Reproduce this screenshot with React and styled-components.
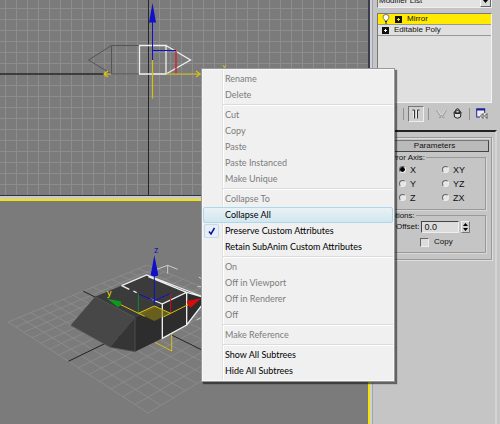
import React from "react";
import styled, { createGlobalStyle } from "styled-components";

const PANEL = "#c5c5c5";
const VIEW_GREY = "#7b7b7b";
const YELLOW = "#f5e400";
const GIZMO_YELLOW = "#d8c010";
const BLUE = "#1010c8";

const GlobalStyle = createGlobalStyle`
  *, *::before, *::after { box-sizing: border-box; }

  body {
    margin: 0;
    background: ${PANEL};
    font-family: "Liberation Sans", Arial, sans-serif;
    font-size: 8px;
    line-height: 10px;
    color: #111;
  }

  button, input, select { font: inherit; color: inherit; margin: 0; }
`;

const Workspace = styled.main`
  position: relative;
  display: flex;
  height: 100vh;
  min-height: 400px;
  overflow: hidden;
`;

/* ---------- viewports ---------- */

const Viewports = styled.div`
  flex: 1;
  min-width: 0;
  display: grid;
  grid-template-rows: 196px 1fr;
  row-gap: 3px;
  background: #c9c9d2;
`;

const Viewport = styled.section`
  min-height: 0;
  overflow: hidden;
  background: ${VIEW_GREY};
  border-right: 2px solid ${(p) => (p.$active ? YELLOW : "#3b3e48")};
  border-top: ${(p) => (p.$active ? `2px solid ${YELLOW}` : "none")};
  border-bottom: ${(p) => (p.$active ? "none" : "1px solid #30333c")};
`;

const Scene = styled.svg`
  display: block;
  width: 100%;
  height: 100%;
`;

// Perspective ground plane, corners: left, bottom, top
const L = [8, 121];
const B = [148, 212];
const T = [147, 64];
const G = -0.241;
const H = 0.179;
const CELLS = 14;

const project = (u, v) => {
  const w = 1 + G * u + H * v;
  return [0, 1].map(
    (i) =>
      ((B[i] * (1 + G) - L[i]) * u + (T[i] * (1 + H) - L[i]) * v + L[i]) / w
  );
};

const segment = (u1, v1, u2, v2) =>
  `M${project(u1, v1).join(" ")}L${project(u2, v2).join(" ")}`;

const groundPath = Array.from({ length: CELLS + 1 }, (_, i) => i / CELLS)
  .map((t) => segment(t, 0, t, 1) + segment(0, t, 1, t))
  .join("");

function FrontView() {
  return (
    <Viewport aria-label="Front viewport">
      <Scene>
        <defs>
          <pattern
            id="grid"
            x="5"
            y="8"
            width="11"
            height="11"
            patternUnits="userSpaceOnUse"
          >
            <path d="M.5 0V11M0 .5H11" stroke="#8d8d8d" fill="none" />
          </pattern>
        </defs>
        <rect width="100%" height="100%" fill="url(#grid)" />
        <path d="M148.5 0V200" stroke="#262626" />
        <path d="M0 74H106" stroke="#262626" strokeWidth="1.3" />
        <g fill="none">
          <path
            d="M139 45.5H111.5L88.5 60L111.5 74H139M111.5 45.5V74"
            stroke="#555"
          />
          <path
            d="M139.5 45.5H166V74H139.5ZM166 45.5L190.5 60L166 74"
            stroke="#efefef"
            strokeWidth="1.3"
          />
          <path d="M152.5 20V60M152.5 50.5H176" stroke={BLUE} />
          <path d="M176 51V74" stroke="#d02830" strokeWidth="1.5" />
          <path
            d="M152.5 60V98.5M166 74H201M196 71L200 74L196 77M111 74H104M108 71L104 74L108 77M106 72L104 74L106 76"
            stroke={GIZMO_YELLOW}
            strokeWidth="1.2"
          />
        </g>
        <path d="M152.5 3L156 22.5H149Z" fill={BLUE} />
        <text x="222" y="70" fontSize="9" fill={GIZMO_YELLOW}>x</text>
      </Scene>
    </Viewport>
  );
}

function PerspectiveView() {
  return (
    <Viewport $active aria-label="Perspective viewport">
      <Scene>
        <path d={groundPath} stroke="#8e8e8e" strokeWidth="0.8" fill="none" />
        <path
          d={segment(0.5, 0, 0.5, 1) + segment(0, 0.5, 1, 0.5)}
          stroke="#1e1e1e"
        />

        {/* model is plotted on a finer grid, three units to the pixel */}
        <g transform="scale(0.33333) translate(0 -63)">
          <path d="M285 350L440 285L603 347L560 340L487 372L405 412Z" fill="#3b3b3b" />
          <path d="M212 436L285 350L405 412L330 502Z" fill="#474747" />
          <path d="M330 502L405 412V515Z" fill="#353535" />
          <path d="M405 412L560 337L604 350V380L560 435L487 475L405 515Z" fill="#2d2d2d" />
          <path d="M285 350L405 412V515M212 436L330 502L405 515" stroke="#5e5e5e" strokeWidth="2" fill="none" />
          <g fill="none" stroke="#eee" strokeWidth="4">
            <path d="M365 317L440 285L603 348M445 290L560 337L487 372V475L560 435L604 378M560 337V435M560 337L604 350" />
            <path d="M365 317L388 328M400 333L410 338M452 357L487 372" />
            <path d="M470 268L503 256L533 268M503 256V281M596 291L604 296M592 320H604M590 420L602 414" strokeWidth="3" stroke="#ccc" />
          </g>
          <path d="M415 400L463 378L510 400L463 423Z" fill="#8f8010" fillOpacity="0.6" />
          <g fill="none" strokeWidth="3">
            <path d="M463 285V378M415 342L463 362L512 340" stroke={BLUE} />
            <path d="M415 340V400" stroke="#148c20" />
            <path d="M512 340V400" stroke="#c81418" />
            <path
              d="M358 372L434 409M415 400L463 378L512 400M490 411L566 373M465 487L515 513V462"
              stroke={GIZMO_YELLOW}
            />
          </g>
          <path d="M463 226L475 286Q463 292 452 286Z" fill={BLUE} />
          <path d="M322 356L362 364Q368 374 354 382Z" fill="#0c9a18" />
          <path d="M604 355L560 363Q562 377 572 383Z" fill="#d80c0c" />
        </g>
        <text x="154" y="52" fontSize="9" fill={BLUE}>z</text>
        <text x="107" y="95" fontSize="9" fill={YELLOW}>y</text>
      </Scene>
    </Viewport>
  );
}

/* ---------- command panel ---------- */

const Panel = styled.aside`
  width: 130px;
  display: flex;
  flex-direction: column;
  background: ${PANEL};
  border-left: 2px solid #d0d0da;
  box-shadow: inset 1px 0 #a2a2a8;
`;

const StackArea = styled.div`
  padding: 0 8px 0 5px;
  display: flex;
  flex-direction: column;
`;

const Picker = styled.label`
  display: flex;
  height: 14px;
  margin-top: -6px;
  margin-bottom: 5px;
  background: #e2e2e2;
  border: 1px solid #777;
  border-color: #777 #eee #eee #777;
`;

const PickerSelect = styled.select`
  flex: 1;
  min-width: 0;
  padding: 0 1px;
  border: 0;
  background: none;
  appearance: none;
`;

const PickerArrow = styled.span`
  width: 11px;
  display: grid;
  place-items: center;
  background: #d8d8d8;
  border: 1px solid;
  border-color: #fff #666 #666 #fff;
`;

const StackList = styled.ul`
  height: 90px;
  margin: 0;
  padding: 0;
  list-style: none;
  background: #e0e0e0;
  border: 1px solid;
  border-color: #77779c #f4f4f4 #f4f4f4 #777;
`;

const StackRow = styled.li`
  height: 11px;
  padding: 0 4px;
  display: flex;
  align-items: center;
  gap: 5px;
  background: ${(p) => (p.$selected ? "#ffea00" : "transparent")};
  border-bottom: 1px solid #999;
`;

const Tools = styled.div`
  height: 27px;
  padding: 2px 2px 8px;
  display: flex;
  align-items: center;
  justify-content: flex-end;
`;

const Tool = styled.button`
  width: 16px;
  height: 16px;
  padding: 0;
  display: grid;
  place-items: center;
  background: ${(p) => (p.$pressed ? "#cfcfcf" : "none")};
  border: 1px solid transparent;
  border-color: ${(p) => (p.$pressed ? "#777 #eee #eee #777" : "transparent")};
`;

const Divider = styled.span`
  width: 1px;
  height: 12px;
  margin: 0 4px;
  background: #909090;
`;

const RolloutArea = styled.div`
  flex: 1;
  margin-right: 3px;
  padding: 5px 3px 0 5px;
  border-top: 2px solid #222;
  border-right: 2px solid #d4d4d4;
`;

const Rollout = styled.section`
  padding: 2px 2px 6px;
  border: 1px solid #999;
  box-shadow: inset 1px 1px #ddd, 1px 1px #ddd;
`;

const RolloutTitle = styled.button`
  display: block;
  width: 100%;
  height: 12px;
  padding: 0;
  background: #bababa;
  border: 1px solid;
  border-color: #777 #444 #444 #777;
  text-align: center;
`;

const Group = styled.fieldset`
  min-width: 0;
  margin: 0 3px;
  padding: 0 0 5px;
  border: 1px solid #999;
  box-shadow: 1px 1px #d8d8d8;
`;

const Legend = styled.legend`
  padding: 0 1px;
  line-height: 11px;
`;

const AxisGrid = styled.div`
  display: grid;
  grid-template-columns: 43px 1fr;
  row-gap: 1px;
  padding-left: 15px;
`;

const Choice = styled.label`
  height: 13px;
  display: flex;
  align-items: center;
  gap: 4px;
  font-size: 9px;
`;

const Radio = styled.input`
  appearance: none;
  width: 7px;
  height: 7px;
  border: 1px solid;
  border-color: #666 #eee #eee #666;
  border-radius: 50%;
  background: #e6e6e6;

  &:checked {
    background: radial-gradient(circle, #000 0 2px, #e6e6e6 3px);
  }
`;

const Field = styled.div`
  display: flex;
  align-items: center;
  gap: 2px;
  padding-left: 12px;
`;

const NumberInput = styled.input`
  width: 38px;
  height: 12px;
  padding: 0 2px;
  border: 1px solid;
  border-color: #444 #eee #eee #444;
  background: #dcdcdc;
  font-size: 9px;
`;

const Spinner = styled.button`
  width: 9px;
  height: 12px;
  padding: 0;
  display: grid;
  place-items: center;
  background: #d0d0d0;
  border: 1px solid;
  border-color: #eee #777 #777 #eee;
`;

const CopyLabel = styled.label`
  display: flex;
  align-items: center;
  gap: 5px;
  margin-top: 4px;
  padding-left: 36px;
`;

const Check = styled.input`
  appearance: none;
  width: 9px;
  height: 9px;
  border: 1px solid;
  border-color: #666 #eee #eee #666;
  background: #dcdcdc;
`;

const AXES = ["X", "XY", "Y", "YZ", "Z", "ZX"];

const PlusIcon = ({ color }) => (
  <svg width="7" height="7" viewBox="0 0 7 7">
    <rect width="7" height="7" fill="#111" />
    <path d="M3.5 2V5M2 3.5H5" stroke={color} />
  </svg>
);

function CommandPanel() {
  return (
    <Panel>
      <StackArea>
        <Picker>
          <PickerSelect aria-label="Modifier List">
            <option>Modifier List</option>
          </PickerSelect>
          <PickerArrow>
            <svg width="5" height="3"><path d="M0 0H5L2.5 3Z" /></svg>
          </PickerArrow>
        </Picker>
        <StackList>
          <StackRow $selected>
            <svg width="8" height="10" viewBox="0 0 8 10">
              <path d="M3 7C3 5.5 1 5 1 3.2A3 2.7 0 0 1 7 3.2C7 5 5 5.5 5 7Z" fill="#fff" stroke="#555" strokeWidth="0.8" />
              <path d="M3 7.5H5M3 9H5" stroke="#222" />
            </svg>
            <PlusIcon color="#ffea00" />
            <span>Mirror</span>
          </StackRow>
          <StackRow>
            <PlusIcon color="#fff" />
            <span>Editable Poly</span>
          </StackRow>
        </StackList>
        <Tools>
          <Divider />
          <Tool $pressed aria-label="Show end result">
            <svg width="10" height="10" viewBox="0 0 10 10" fill="none" stroke="#333">
              <path d="M1.5 1H3.5V9.5M8.5 1H6.5V9.5" />
              <path d="M2.5 2V9M5.5 1V9" stroke="#eee" />
            </svg>
          </Tool>
          <Divider />
          <Tool aria-label="Make unique">
            <svg width="11" height="10" viewBox="0 0 11 10" fill="none" stroke="#999">
              <path d="M.5 1L4.5 7.5L5.5 6L6.5 7.5L10.5 1M3 8.5H5M6.5 8.5H8.5" />
              <path d="M1.5 1L5 6M9.5 1L6 6" stroke="#e8e8e8" strokeWidth="0.6" />
            </svg>
          </Tool>
          <Tool aria-label="Remove modifier">
            <svg width="9" height="11" viewBox="0 0 9 11">
              <path d="M2.5 3Q2.5 1 4.5 .8Q6.5 1 6.5 3" fill="none" stroke="#222" />
              <path d="M1 4Q4.5 1 8 4L7.5 9Q4.5 11.5 1.5 9Z" fill="#ddd" stroke="#222" />
              <path d="M1.5 4.5Q4.5 6 7.5 4.5" stroke="#222" strokeWidth="1.5" fill="none" />
            </svg>
          </Tool>
          <Divider />
          <Tool aria-label="Configure modifier sets">
            <svg width="12" height="11" viewBox="0 0 12 11">
              <rect x=".7" y="1" width="8" height="8" fill="#eee" stroke="#2020a0" />
              <path d="M.5 1.5H9" stroke="#2020a0" strokeWidth="2" />
              <path d="M4 5H11.5V10.5H4Z" fill="#ddd" />
              <path d="M4.5 8L7 5.5V10.5ZM8.5 8L11 5.5V10.5Z" fill="#eee" stroke="#333" strokeWidth="0.8" />
            </svg>
          </Tool>
        </Tools>
      </StackArea>

      <RolloutArea>
        <Rollout>
          <RolloutTitle>Parameters</RolloutTitle>
          <Group>
            <Legend>Mirror Axis:</Legend>
            <AxisGrid>
              {AXES.map((axis) => (
                <Choice key={axis}>
                  <Radio type="radio" name="axis" defaultChecked={axis === "X"} />
                  {axis}
                </Choice>
              ))}
            </AxisGrid>
          </Group>
          <Group>
            <Legend>Options:</Legend>
            <Field>
              <label htmlFor="offset">Offset:</label>
              <NumberInput id="offset" defaultValue="0.0" />
              <Spinner aria-label="Adjust offset">
                <svg width="5" height="8"><path d="M0 3L2.5 0L5 3ZM0 5H5L2.5 8Z" /></svg>
              </Spinner>
            </Field>
            <CopyLabel>
              <Check type="checkbox" />
              Copy
            </CopyLabel>
          </Group>
        </Rollout>
      </RolloutArea>
    </Panel>
  );
}

/* ---------- context menu ---------- */

const Menu = styled.div`
  position: absolute;
  left: 201px;
  top: 68px;
  width: 194px;
  padding: 2px 1px;
  background: linear-gradient(
    to right,
    #f0f0f0 20px,
    #e0e0e0 20px 21px,
    #fff 21px 22px,
    #f0f0f0 22px
  );
  border: 1px solid #999;
  box-shadow: inset 0 0 0 1px #f8f8f8, 2px 2px 1px rgba(0, 0, 0, 0.5);
  font-family: Lato, "Open Sans", sans-serif;
`;

const MenuItem = styled.button`
  position: relative;
  display: flex;
  align-items: center;
  width: 100%;
  height: 16px;
  padding: 0 0 1px 21px;
  border: 1px solid ${(p) => (p.$hover ? "#aed8ea" : "transparent")};
  border-radius: 2px;
  background: ${(p) =>
    p.$hover ? "linear-gradient(#e8f2f7, #d2e7f0)" : "transparent"};
  color: #000;
  font-size: 9px;
  font-weight: 400;
  line-height: 13px;
  white-space: nowrap;

  &:disabled {
    color: #7c7c7c;
  }
`;

const Tick = styled.span`
  position: absolute;
  left: 0;
  top: 0;
  width: 15px;
  height: 14px;
  display: grid;
  place-items: center;
  background: #e6eff7;
  border: 1px solid #c4d9e8;
  border-radius: 2px;
`;

const Separator = styled.hr`
  height: 2px;
  margin: 1px 0 1px 20px;
  border: 0;
  border-top: 1px solid #dcdcdc;
  background: #fff;
`;

const off = (label) => ({ label, disabled: true });

const SECTIONS = [
  [off("Rename"), off("Delete")],
  [
    off("Cut"),
    off("Copy"),
    off("Paste"),
    off("Paste Instanced"),
    off("Make Unique"),
  ],
  [
    off("Collapse To"),
    { label: "Collapse All", hover: true },
    { label: "Preserve Custom Attributes", checked: true },
    { label: "Retain SubAnim Custom Attributes" },
  ],
  [off("On"), off("Off in Viewport"), off("Off in Renderer"), off("Off")],
  [off("Make Reference")],
  [{ label: "Show All Subtrees" }, { label: "Hide All Subtrees" }],
];

function ContextMenu() {
  return (
    <Menu role="menu">
      {SECTIONS.map((items, i) => (
        <React.Fragment key={i}>
          {i > 0 && <Separator />}
          {items.map((item) => (
            <MenuItem
              key={item.label}
              role={item.checked ? "menuitemcheckbox" : "menuitem"}
              aria-checked={item.checked}
              disabled={item.disabled}
              $hover={item.hover}
            >
              {item.checked && (
                <Tick>
                  <svg width="8" height="8" viewBox="0 0 8 8">
                    <path d="M1 4.5L3 7L6.5 1" fill="none" stroke="#10109a" strokeWidth="1.5" />
                  </svg>
                </Tick>
              )}
              {item.label}
            </MenuItem>
          ))}
        </React.Fragment>
      ))}
    </Menu>
  );
}

export default function App() {
  return (
    <>
      <GlobalStyle />
      <Workspace>
        <Viewports>
          <FrontView />
          <PerspectiveView />
        </Viewports>
        <CommandPanel />
        <ContextMenu />
      </Workspace>
    </>
  );
}
